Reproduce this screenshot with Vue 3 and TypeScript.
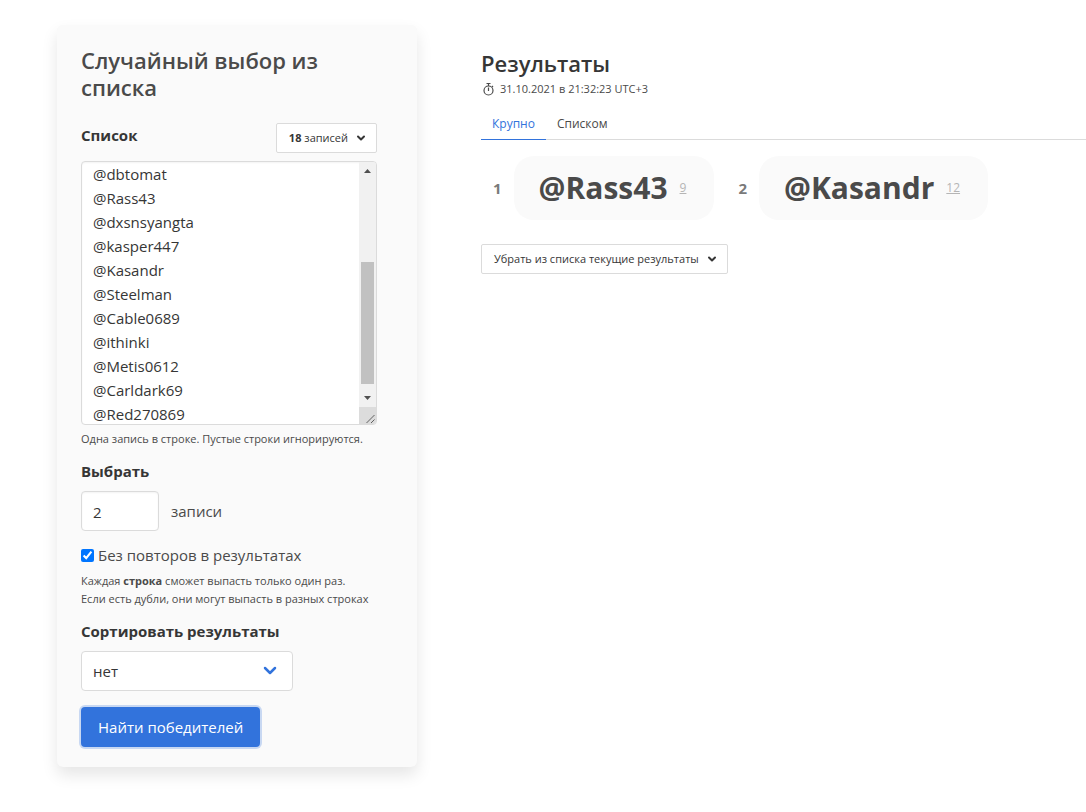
<script setup lang="ts">
import { computed, onMounted, ref } from 'vue'

interface Winner {
  place: number
  name: string
  row: number
}

const entries = ref<string>(
  [
    '@Marina77', '@Oleg2104', '@sunrise', '@Viktor58', '@lunatik', '@Andrey91', '@Polina12',
    '@dbtomat', '@Rass43', '@dxsnsyangta', '@kasper447', '@Kasandr', '@Steelman',
    '@Cable0689', '@ithinki', '@Metis0612', '@Carldark69', '@Red270869',
  ].join('\n'),
)
const count = ref<string>('2')
const unique = ref<boolean>(true)
const order = ref<string>('none')
const view = ref<'large' | 'list'>('large')
const listBox = ref<HTMLTextAreaElement | null>(null)
const thumb = ref<{ top: string; height: string }>({ top: '0%', height: '100%' })

const total = computed<number>(() => entries.value.split('\n').filter((line) => line.trim()).length)

const winners = ref<Winner[]>([
  { place: 1, name: '@Rass43', row: 9 },
  { place: 2, name: '@Kasandr', row: 12 },
])

function updateThumb(): void {
  const box = listBox.value
  if (!box) return
  thumb.value = {
    top: `${(box.scrollTop / box.scrollHeight) * 100}%`,
    height: `${(box.clientHeight / box.scrollHeight) * 100}%`,
  }
}

onMounted(() => {
  if (listBox.value) listBox.value.scrollTop = 179
  updateThumb()
})
</script>

<template>
  <main class="page">
    <form class="panel" @submit.prevent>
      <h1 class="title">Случайный выбор из списка</h1>

      <div class="list-head">
        <label class="label" for="entries">Список</label>
        <button type="button" class="button small">
          <span><b>{{ total }}</b> записей</span>
          <svg class="chevron" viewBox="0 0 10 8" aria-hidden="true"><path d="M2 2.500l3 3 3-3" /></svg>
        </button>
      </div>
      <div class="entries-box">
        <textarea
          id="entries"
          ref="listBox"
          v-model="entries"
          class="control entries"
          spellcheck="false"
          @scroll="updateThumb"
          @input="updateThumb"
        ></textarea>
        <div class="scrollbar" aria-hidden="true">
          <svg class="arrow" viewBox="0 0 17 17"><path d="M5 11l3.500-4 3.500 4z" /></svg>
          <div class="track"><div class="thumb" :style="thumb"></div></div>
          <svg class="arrow" viewBox="0 0 17 17"><path d="M5 6l3.500 4L12 6z" /></svg>
          <svg class="grip" viewBox="0 0 17 17"><path d="M7.500 16l8-8M12 16l3.500-3.500" /></svg>
        </div>
      </div>
      <p class="help">Одна запись в строке. Пустые строки игнорируются.</p>

      <label class="label spaced" for="count">Выбрать</label>
      <div class="count-row">
        <input id="count" v-model="count" type="text" inputmode="numeric" class="control count" />
        <span>записи</span>
      </div>

      <label class="check"><input v-model="unique" type="checkbox" /><span>Без повторов в результатах</span></label>
      <p class="help">
        Каждая <b>строка</b> сможет выпасть только один раз.<br />
        Если есть дубли, они могут выпасть в разных строках
      </p>

      <label class="label spaced" for="order">Сортировать результаты</label>
      <div class="select">
        <select id="order" v-model="order" class="control">
          <option value="none">нет</option>
          <option value="asc">по алфавиту</option>
        </select>
        <svg class="select-arrow" viewBox="0 0 14 10" aria-hidden="true"><path d="M2 2l5 5 5-5" /></svg>
      </div>

      <button type="submit" class="button primary">Найти победителей</button>
    </form>

    <section class="results">
      <h2 class="title dark">Результаты</h2>
      <p class="stamp">
        <svg class="watch" viewBox="0 0 15 15" aria-hidden="true">
          <circle cx="7.500" cy="8.500" r="4.500" />
          <path d="M5.500 1.500h4M7.500 1.500V4M7.500 5.500v3.500M11 5l1-1" />
        </svg>
        <time datetime="2021-10-31T21:32:23+03:00">31.10.2021 в 21:32:23 UTC+3</time>
      </p>

      <nav class="tabs">
        <a href="#large" :class="{ active: view === 'large' }" @click.prevent="view = 'large'">Крупно</a>
        <a href="#list" :class="{ active: view === 'list' }" @click.prevent="view = 'list'">Списком</a>
      </nav>

      <ol class="winners">
        <li v-for="winner in winners" :key="winner.place" class="winner">
          <span class="place">{{ winner.place }}</span>
          <span class="card">
            <strong>{{ winner.name }}</strong>
            <span class="row">{{ winner.row }}</span>
          </span>
        </li>
      </ol>

      <button type="button" class="button small">
        <span>Убрать из списка текущие результаты</span>
        <svg class="chevron" viewBox="0 0 10 8" aria-hidden="true"><path d="M2 2.500l3 3 3-3" /></svg>
      </button>
    </section>
  </main>
</template>

<style>
body {
  margin: 0;
  background: #fff;
}
</style>

<style scoped>
* {
  box-sizing: border-box;
}

.page {
  display: flex;
  align-items: flex-start;
  gap: 64px;
  padding: 25px 0 45px 57px;
  color: #4a4a4a;
  font-family: "Segoe UI", "Open Sans", "Noto Sans", sans-serif;
  font-size: 15px;
  line-height: 24px;
}

.panel {
  flex: 0 1 360px;
  padding: 22px 40px 20px 24px;
  border-radius: 6px;
  background: #fafafa;
  box-shadow: 0 8px 16px rgba(10, 10, 10, 0.1), 0 0 1px rgba(10, 10, 10, 0.02);
}

.title {
  margin: 0 0 22px;
  font-size: 22px;
  font-weight: 600;
  line-height: 27px;
}

.title.dark {
  margin: 0;
  color: #363636;
}

.list-head {
  display: flex;
  justify-content: space-between;
  align-items: flex-start;
  margin-bottom: 8px;
}

.label {
  display: block;
  color: #363636;
  font-weight: 700;
}

.label.spaced {
  margin: 11px 0 8px;
}

.control {
  border: 1px solid #dbdbdb;
  border-radius: 4px;
  background: #fff;
  color: #363636;
  font: inherit;
  outline: none;
}

.entries-box {
  position: relative;
}

.entries {
  display: block;
  width: 100%;
  height: 264px;
  padding: 11px 28px 11px 11px;
  resize: none;
  overflow-y: scroll;
  box-shadow: inset 0 1px 2px rgba(10, 10, 10, 0.05);
}

.scrollbar {
  position: absolute;
  top: 1px;
  right: 1px;
  bottom: 1px;
  display: flex;
  flex-direction: column;
  width: 17px;
  overflow: hidden;
  border-radius: 0 3px 3px 0;
  background: #f1f1f1;
  pointer-events: none;
}

.arrow,
.grip {
  flex: none;
  width: 17px;
  height: 17px;
}

.arrow {
  fill: #505050;
}

.grip {
  background: #dcdcdc;
  fill: none;
  stroke: #606060;
}

.track {
  position: relative;
  flex: 1;
}

.thumb {
  position: absolute;
  right: 2px;
  left: 2px;
  background: #c1c1c1;
}

.help {
  margin: 5px 0 0;
  font-size: 11px;
  line-height: 18px;
}

.count-row {
  display: flex;
  align-items: center;
  gap: 12px;
}

.count {
  width: 78px;
  height: 40px;
  padding: 2px 11px 0;
  box-shadow: inset 0 1px 2px rgba(10, 10, 10, 0.05);
}

.check {
  display: flex;
  align-items: center;
  gap: 4px;
  margin-top: 12px;
}

.check input {
  width: 13px;
  height: 13px;
  margin: 0;
  accent-color: #0075ff;
}

.select {
  position: relative;
  width: 212px;
  max-width: 100%;
}

.select select {
  display: block;
  width: 100%;
  height: 40px;
  padding: 0 40px 0 11px;
  appearance: none;
}

.select-arrow {
  position: absolute;
  top: 15px;
  right: 16px;
  width: 14px;
  height: 10px;
  fill: none;
  stroke: #3273dc;
  stroke-width: 2.500;
  stroke-linecap: round;
  stroke-linejoin: round;
  pointer-events: none;
}

.button {
  display: inline-flex;
  align-items: center;
  justify-content: center;
  border: 1px solid #dbdbdb;
  background: #fff;
  color: #363636;
  font: inherit;
  cursor: pointer;
}

.button.small {
  gap: 8px;
  height: 30px;
  padding: 0 10px 0 12px;
  border-radius: 2px;
  font-size: 11px;
}

.chevron {
  width: 10px;
  height: 8px;
  fill: none;
  stroke: currentColor;
  stroke-width: 2;
  stroke-linecap: round;
  stroke-linejoin: round;
}

.button.primary {
  height: 40px;
  margin-top: 16px;
  padding: 0 17px;
  border: 0;
  border-radius: 4px;
  background: #3273dc;
  box-shadow: 0 0 0 2px rgba(50, 115, 220, 0.25);
  color: #fff;
}

.results {
  flex: 1 1 0;
  min-width: 0;
  padding-top: 25px;
}

.stamp {
  display: flex;
  align-items: center;
  gap: 4px;
  margin: 0;
  font-size: 11px;
}

.watch {
  width: 15px;
  height: 15px;
  fill: none;
  stroke: #4a4a4a;
  stroke-width: 1.200;
}

.tabs {
  display: flex;
  margin: 8px 0 16px;
  border-bottom: 1px solid #dbdbdb;
  font-size: 12px;
  line-height: 18px;
}

.tabs a {
  margin-bottom: -1px;
  padding: 6px 11px;
  border-bottom: 1px solid #dbdbdb;
  color: #4a4a4a;
  text-decoration: none;
}

.tabs a.active {
  border-bottom-color: #3273dc;
  color: #3273dc;
}

.winners {
  display: flex;
  flex-wrap: wrap;
  gap: 24px;
  margin: 0 0 24px;
  padding: 0 0 0 12px;
  list-style: none;
}

.winner {
  display: flex;
  align-items: center;
  gap: 12px;
}

.place {
  color: #7a7a7a;
  font-weight: 700;
}

.card {
  display: flex;
  align-items: center;
  gap: 12px;
  height: 64px;
  padding: 0 28px 0 25px;
  border-radius: 20px;
  background: #fafafa;
}

.card strong {
  font-size: 30px;
  line-height: 48px;
}

.row {
  color: #b5b5b5;
  font-size: 12px;
  text-decoration: underline;
}
</style>
